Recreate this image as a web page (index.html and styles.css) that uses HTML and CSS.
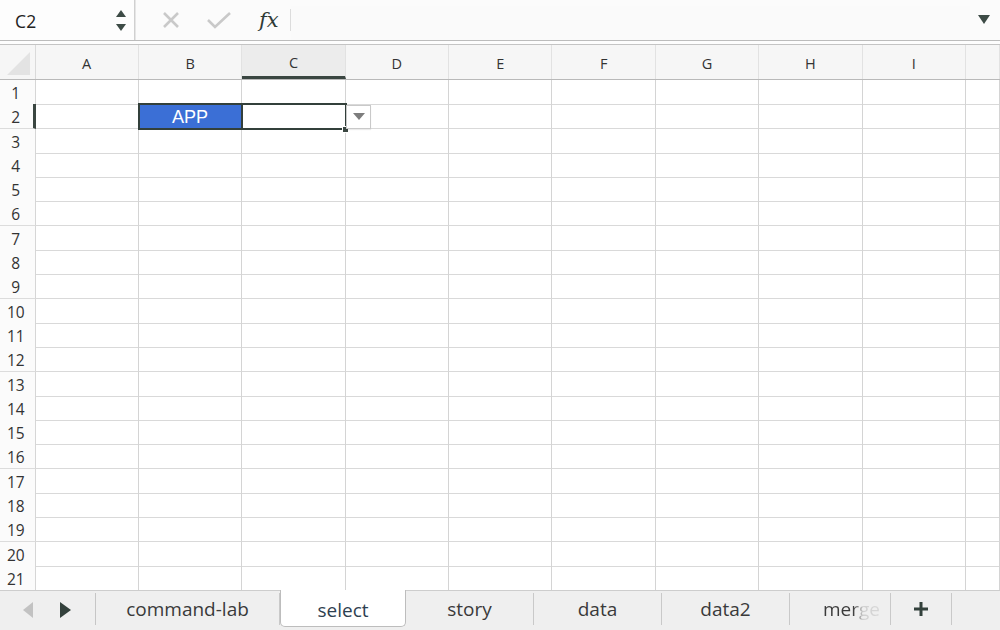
FILE: index.html
```html
<!DOCTYPE html>
<html>
<head>
<meta charset="utf-8">
<link rel="stylesheet" href="styles.css">
</head>
<body>
<div class="app">
  <div class="fbar">
    <div class="namebox">
      <span class="nb-text">C2</span>
      <span class="stepper">
        <svg width="12" height="24" viewBox="0 0 12 24"><polygon points="6,1 11,8 1,8" fill="#3d4b46"/><polygon points="1,15 11,15 6,22" fill="#3d4b46"/></svg>
      </span>
    </div>
    <div class="fbtns">
      <svg class="ico-x" width="20" height="20" viewBox="0 0 20 20"><path d="M3 3 L17 17 M17 3 L3 17" stroke="#c9c9c9" stroke-width="2.6" fill="none"/></svg>
      <svg class="ico-ok" width="26" height="20" viewBox="0 0 26 20"><path d="M2 10 L9 17 L24 3" stroke="#c9c9c9" stroke-width="2.6" fill="none"/></svg>
      <span class="fx">fx</span>
    </div>
    <div class="finput"></div>
    <div class="fdrop"><svg width="12" height="10" viewBox="0 0 12 10"><polygon points="0,1 12,1 6,10" fill="#3d4b46"/></svg></div>
  </div>
  <div class="fsep"></div>
  <div class="sheet">
    <div class="row hdr">
      <div class="corner"><svg width="34" height="34" viewBox="0 0 34 34"><polygon points="7,30 30,30 30,7" fill="#e3e3e3"/></svg></div>
      <div class="ch">A</div><div class="ch">B</div><div class="ch sel">C</div><div class="ch">D</div><div class="ch">E</div><div class="ch">F</div><div class="ch">G</div><div class="ch">H</div><div class="ch">I</div><div class="ch"></div>
    </div>
    <div class="row"><div class="rh">1</div><div class="c"></div><div class="c"></div><div class="c"></div><div class="c"></div><div class="c"></div><div class="c"></div><div class="c"></div><div class="c"></div><div class="c"></div><div class="c"></div></div>
    <div class="row"><div class="rh sel">2</div><div class="c"></div><div class="c fill">APP</div><div class="c active"><span class="handle"></span><span class="dd"><svg width="12" height="8" viewBox="0 0 12 8"><polygon points="0,0 12,0 6,7" fill="#7d7d7d"/></svg></span></div><div class="c"></div><div class="c"></div><div class="c"></div><div class="c"></div><div class="c"></div><div class="c"></div><div class="c"></div></div>
    <div class="row"><div class="rh">3</div><div class="c"></div><div class="c"></div><div class="c"></div><div class="c"></div><div class="c"></div><div class="c"></div><div class="c"></div><div class="c"></div><div class="c"></div><div class="c"></div></div>
    <div class="row"><div class="rh">4</div><div class="c"></div><div class="c"></div><div class="c"></div><div class="c"></div><div class="c"></div><div class="c"></div><div class="c"></div><div class="c"></div><div class="c"></div><div class="c"></div></div>
    <div class="row"><div class="rh">5</div><div class="c"></div><div class="c"></div><div class="c"></div><div class="c"></div><div class="c"></div><div class="c"></div><div class="c"></div><div class="c"></div><div class="c"></div><div class="c"></div></div>
    <div class="row"><div class="rh">6</div><div class="c"></div><div class="c"></div><div class="c"></div><div class="c"></div><div class="c"></div><div class="c"></div><div class="c"></div><div class="c"></div><div class="c"></div><div class="c"></div></div>
    <div class="row"><div class="rh">7</div><div class="c"></div><div class="c"></div><div class="c"></div><div class="c"></div><div class="c"></div><div class="c"></div><div class="c"></div><div class="c"></div><div class="c"></div><div class="c"></div></div>
    <div class="row"><div class="rh">8</div><div class="c"></div><div class="c"></div><div class="c"></div><div class="c"></div><div class="c"></div><div class="c"></div><div class="c"></div><div class="c"></div><div class="c"></div><div class="c"></div></div>
    <div class="row"><div class="rh">9</div><div class="c"></div><div class="c"></div><div class="c"></div><div class="c"></div><div class="c"></div><div class="c"></div><div class="c"></div><div class="c"></div><div class="c"></div><div class="c"></div></div>
    <div class="row"><div class="rh">10</div><div class="c"></div><div class="c"></div><div class="c"></div><div class="c"></div><div class="c"></div><div class="c"></div><div class="c"></div><div class="c"></div><div class="c"></div><div class="c"></div></div>
    <div class="row"><div class="rh">11</div><div class="c"></div><div class="c"></div><div class="c"></div><div class="c"></div><div class="c"></div><div class="c"></div><div class="c"></div><div class="c"></div><div class="c"></div><div class="c"></div></div>
    <div class="row"><div class="rh">12</div><div class="c"></div><div class="c"></div><div class="c"></div><div class="c"></div><div class="c"></div><div class="c"></div><div class="c"></div><div class="c"></div><div class="c"></div><div class="c"></div></div>
    <div class="row"><div class="rh">13</div><div class="c"></div><div class="c"></div><div class="c"></div><div class="c"></div><div class="c"></div><div class="c"></div><div class="c"></div><div class="c"></div><div class="c"></div><div class="c"></div></div>
    <div class="row"><div class="rh">14</div><div class="c"></div><div class="c"></div><div class="c"></div><div class="c"></div><div class="c"></div><div class="c"></div><div class="c"></div><div class="c"></div><div class="c"></div><div class="c"></div></div>
    <div class="row"><div class="rh">15</div><div class="c"></div><div class="c"></div><div class="c"></div><div class="c"></div><div class="c"></div><div class="c"></div><div class="c"></div><div class="c"></div><div class="c"></div><div class="c"></div></div>
    <div class="row"><div class="rh">16</div><div class="c"></div><div class="c"></div><div class="c"></div><div class="c"></div><div class="c"></div><div class="c"></div><div class="c"></div><div class="c"></div><div class="c"></div><div class="c"></div></div>
    <div class="row"><div class="rh">17</div><div class="c"></div><div class="c"></div><div class="c"></div><div class="c"></div><div class="c"></div><div class="c"></div><div class="c"></div><div class="c"></div><div class="c"></div><div class="c"></div></div>
    <div class="row"><div class="rh">18</div><div class="c"></div><div class="c"></div><div class="c"></div><div class="c"></div><div class="c"></div><div class="c"></div><div class="c"></div><div class="c"></div><div class="c"></div><div class="c"></div></div>
    <div class="row"><div class="rh">19</div><div class="c"></div><div class="c"></div><div class="c"></div><div class="c"></div><div class="c"></div><div class="c"></div><div class="c"></div><div class="c"></div><div class="c"></div><div class="c"></div></div>
    <div class="row"><div class="rh">20</div><div class="c"></div><div class="c"></div><div class="c"></div><div class="c"></div><div class="c"></div><div class="c"></div><div class="c"></div><div class="c"></div><div class="c"></div><div class="c"></div></div>
    <div class="row"><div class="rh">21</div><div class="c"></div><div class="c"></div><div class="c"></div><div class="c"></div><div class="c"></div><div class="c"></div><div class="c"></div><div class="c"></div><div class="c"></div><div class="c"></div></div>
  </div>
  <div class="tabs">
    <div class="nav">
      <svg width="12" height="18" viewBox="0 0 12 18"><polygon points="11,1 11,17 1,9" fill="#c2c2c2"/></svg>
      <svg width="12" height="18" viewBox="0 0 12 18"><polygon points="1,1 1,17 12,9" fill="#33413c"/></svg>
    </div>
    <div class="tab w184">command-lab</div>
    <div class="tab active">select</div>
    <div class="tab">story</div>
    <div class="tab">data</div>
    <div class="tab">data2</div>
    <div class="tab clip"><span class="fade">merge</span></div>
    <div class="tab add">
      <svg width="16" height="16" viewBox="0 0 16 16"><path d="M8 1 V15 M1 8 H15" stroke="#33413c" stroke-width="3" fill="none"/></svg>
    </div>
    <div class="tab rest"></div>
  </div>
</div>
</body>
</html>
```
FILE: styles.css
```css
* { box-sizing: border-box; }
html, body { margin: 0; padding: 0; }
body {
  width: 1000px;
  height: 630px;
  overflow: hidden;
  background: #ffffff;
  font-family: "Open Sans", "Noto Sans", "Liberation Sans", sans-serif;
  color: #333;
}
.app { width: 1000px; height: 630px; display: flex; flex-direction: column; }

/* formula bar */
.fbar {
  height: 40px;
  display: flex;
  align-items: stretch;
  background: #fbfbfb;
}
.namebox {
  width: 135px;
  display: flex;
  align-items: center;
  justify-content: space-between;
  padding: 0 7px 0 15px;
  background: #fdfdfd;
  border-right: 1px solid #d0d0d0;
  box-shadow: 1px 0 0 #e6e6e6;
}
.nb-text { font-size: 17.5px; color: #222; letter-spacing: 0.3px; padding-top: 2px; }
.stepper { display: flex; align-items: center; height: 100%; padding-top: 2px; }
.fbtns {
  width: 154px;
  display: flex;
  align-items: center;
  padding-left: 24px;
  gap: 22px;
  margin-left: 2px;
}
.ico-ok { margin-left: 3px; }
.fx {
  font-family: "DejaVu Serif", "Liberation Serif", serif;
  font-style: italic;
  font-size: 21px;
  color: #2f3a36;
  margin-left: 5px;
  padding-right: 11px;
  border-right: 1px solid #dcdcdc;
  line-height: 22px;
}
.finput { flex: 1; background: #fafafa; margin: 6px 0 0 0; }
.fdrop {
  width: 30px;
  display: flex;
  align-items: center;
  justify-content: center;
  padding-bottom: 2px;
  padding-right: 2px;
}

.fsep {
  height: 5px;
  border-top: 1px solid #bcbcbc;
  border-bottom: 1px solid #c4c4c4;
  background: #fdfdfd;
}

/* sheet */
.sheet { flex: 1; overflow: hidden; display: flex; flex-direction: column; }
.row {
  display: grid;
  grid-template-columns: 35.5px repeat(9, 103.4px) 1fr;
  height: 24.3px;
}
.row.hdr { height: 35px; background: #f6f6f6; border-bottom: 1px solid #b9b9b9; }
.corner { border-right: 1px solid #dadada; background: #f6f6f6; }
.corner svg { display: block; }
.ch {
  display: flex;
  align-items: center;
  justify-content: center;
  font-size: 14.5px;
  color: #333;
  border-right: 1px solid #e2e2e2;
  padding-top: 2px;
}
.ch.sel { background: #ececec; border-bottom: 3px solid #3a4641; padding-top: 4px; }
.rh {
  display: flex;
  align-items: center;
  justify-content: center;
  font-size: 15.5px;
  color: #333;
  background: #fbfbfb;
  border-right: 1px solid #d6d6d6;
  border-bottom: 1px solid #dcdcdc;
  padding-right: 3px;
  padding-top: 2px;
}
.rh.sel { border-right: 3px solid #3a4641; padding-right: 1px; }
.c {
  border-right: 1px solid #d4d4d4;
  border-bottom: 1px solid #d9d9d9;
  position: relative;
}
.c.fill {
  background: #3b6fd6;
  color: #fff;
  font-family: "Liberation Sans", Arial, sans-serif;
  font-size: 18px;
  display: flex;
  align-items: center;
  justify-content: center;
  padding-top: 3px;
  outline: 2px solid #33403b;
  outline-offset: -1px;
  z-index: 1;
}
.c.active {
  outline: 2px solid #33403b;
  outline-offset: -1px;
  z-index: 2;
}
.handle {
  position: absolute;
  right: -4px;
  bottom: -5px;
  width: 7px;
  height: 7px;
  background: #3a4641;
  border: 1px solid #fff;
}
.dd {
  position: absolute;
  left: 104px;
  top: 1px;
  width: 25px;
  height: 24px;
  background: #fff;
  border: 1px solid #c9c9c9;
  display: flex;
  align-items: center;
  justify-content: center;
  box-shadow: 0 1px 1px rgba(0,0,0,0.08);
}

/* tabs */
.tabs {
  height: 40px;
  display: flex;
  background: #efefef;
  border-top: 1px solid #cdcdcd;
}
.nav {
  width: 96px;
  display: flex;
  align-items: center;
  gap: 25px;
  padding-left: 22px;
  padding-top: 2px;
  border-right: 1px solid #c6c6c6;
  margin: 2px 0 5px 0;
}
.tab {
  width: 128px;
  display: flex;
  align-items: center;
  justify-content: center;
  font-size: 19px;
  color: #3a3a3a;
  border-right: 1px solid #c9c9c9;
  margin: 2px 0 5px 0;
  padding-bottom: 1px;
}
.tab.w184 { width: 184px; }
.tab.active {
  width: 126px;
  background: #ffffff;
  color: #2e4050;
  border: 1px solid #bdbdbd;
  border-top: none;
  border-radius: 0 0 5px 5px;
  margin: -1px 0 3px 0;
  padding-top: 3px;
  padding-bottom: 0;
}
.tab.clip { width: 101px; justify-content: flex-start; padding-left: 33px; overflow: hidden; }
.fade {
  background: linear-gradient(90deg, #3a3a3a 0, #3a3a3a 30px, #d0d0d0 40px, #d8d8d8 100%);
  -webkit-background-clip: text;
  background-clip: text;
  color: transparent;
}
.tab.add { width: 61px; }
.tab.rest { flex: 1; border-right: none; }
```
